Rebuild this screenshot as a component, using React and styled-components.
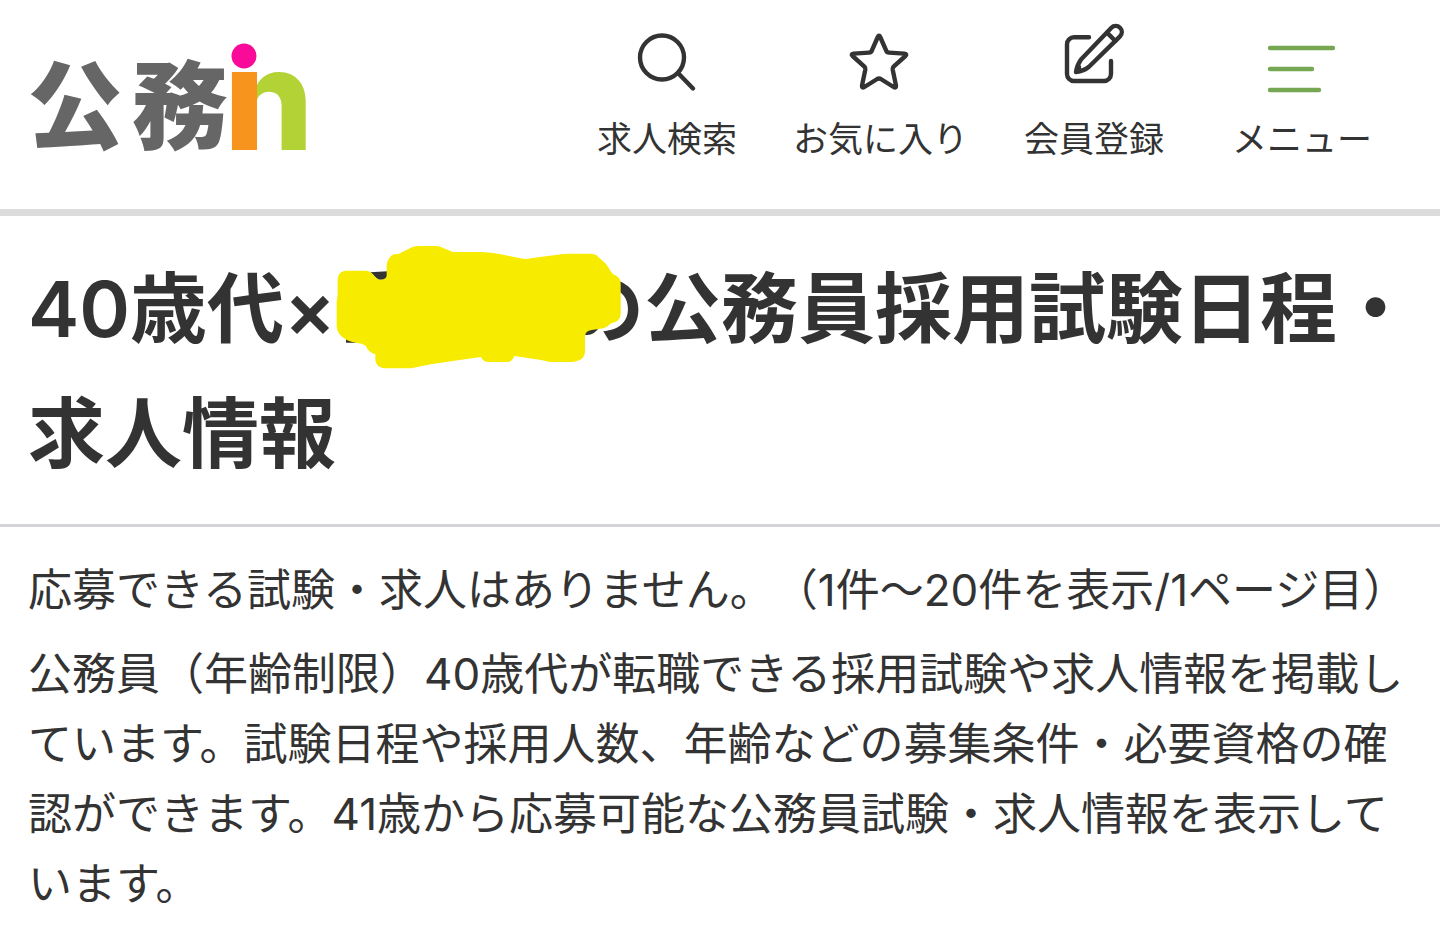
import React from 'react'
import styled, { createGlobalStyle } from 'styled-components'


const App = () => (
    <>
        <GlobalStyle />

        <Header>
            <LogoLink href="#" aria-label="公務in">
                <Logo />
            </LogoLink>

            <Nav>
                <NavLink href="#search">
                    <SearchIcon />
                    求人検索
                </NavLink>
                <NavLink href="#favorites">
                    <StarIcon />
                    お気に入り
                </NavLink>
                <NavLink href="#register">
                    <EditIcon />
                    会員登録
                </NavLink>
                <MenuButton type="button">
                    <MenuIcon />
                    メニュー
                </MenuButton>
            </Nav>
        </Header>

        <main>
            <TitleArea>
                <Title>
                    40歳代×
                    <Hidden><Marker /></Hidden>
                    の公務員採用試験日程・求人情報
                </Title>
            </TitleArea>

            <Intro>
                <Text>応募できる試験・求人はありません。（1件～20件を表示/1ページ目）</Text>
                <Text>
                    公務員（年齢制限）40歳代が転職できる採用試験や求人情報を掲載しています。試験日程や採用人数、年齢などの募集条件・必要資格の確認ができます。41歳から応募可能な公務員試験・求人情報を表示しています。
                </Text>
            </Intro>
        </main>
    </>
)

const Logo = () => (
    <LogoSvg viewBox="0 0 278 110" aria-hidden="true">
        <LogoKanji x="-3" y="99">公</LogoKanji>
        <LogoKanji x="102" y="99">務</LogoKanji>
        <LogoLetter x="194" y="108">n</LogoLetter>
        <rect x="202" y="30" width="25" height="78" fill="#f7941e" />
        <circle cx="214" cy="14" r="12.5" fill="#f90a98" />
    </LogoSvg>
)

const SearchIcon = () => (
    <Icon viewBox="0 0 72 72" aria-hidden="true">
        <circle cx="31" cy="35.5" r="22" />
        <path d="M47 51L62 66.5" />
    </Icon>
)

const StarIcon = () => (
    <Icon viewBox="0 0 72 72" aria-hidden="true">
        <path d="M33.8 15Q35 12.6 36.2 15L42.2 28.6Q43 30.5 45 30.6L60.5 31.6Q63.4 32 61.4 34L49.6 44.6Q48.4 45.8 48.7 47.6L52 63.6Q52.2 66.6 49.6 65L36.8 57Q35 56 33.2 57L20.4 65Q17.8 66.6 18 63.6L21.3 47.6Q21.6 45.8 20.4 44.6L8.6 34Q6.6 32 9.5 31.6L25 30.6Q27 30.5 27.8 28.6Z" />
    </Icon>
)

const EditIcon = () => (
    <Icon viewBox="0 0 72 72" aria-hidden="true">
        <path d="M31 15.3H16a7 7 0 0 0-7 7V52a7 7 0 0 0 7 7H46a7 7 0 0 0 7-7V39" />
        <path d="M18 50Q19 43 23 37.5L53.4 5.8a6 6 0 0 1 8.6 8.6L31 44.8Q26 49 18 50L21 45" />
        <path d="M49 10.6L57.4 19" />
    </Icon>
)

const MenuIcon = () => (
    <Icon viewBox="0 0 72 72" $color="#76a854" aria-hidden="true">
        <path d="M4 26H67M4 47H46M4 68H53" />
    </Icon>
)

const Marker = () => (
    <MarkerSvg viewBox="45 30 861 375" aria-hidden="true">
        <path fill="#333" d="M148 112L200 109V134H172ZM75 312H104V323H75Z" />
        <path
            fill="#f7eb00"
            d="M72 107H134Q148 108 156 118Q168 136 180 134Q197 133 197 120V92Q200 66 218 58L232 57L268 39Q278 33 292 33H345Q356 33 368 40L396 51H480Q510 52 540 58L598 70Q614 74 630 70L720 58L740 56H812Q826 57 834 68Q858 86 866 104L876 118Q899 126 899 145V236Q898 256 880 262Q868 264 860 274Q850 281 838 281L812 285Q792 288 792 304V352Q790 372 770 377L756 381H686L660 375L580 363Q574 380 560 381H500Q486 380 480 366L400 377L330 388L270 400H188Q166 396 163 376V358Q142 352 134 332L122 326Q90 322 76 314Q48 300 47 274V200L50 180V132Q52 110 72 107Z"
        />
    </MarkerSvg>
)

const GlobalStyle = createGlobalStyle`
    * {
        box-sizing: border-box;
    }

    body {
        margin: 0;
        background-color: #fff;
        color: #333;
        font-family: Inter, 'Noto Sans CJK JP', sans-serif;
        text-spacing-trim: space-all;
    }
`

const Header = styled.header`
    display: flex;
    justify-content: space-between;
    align-items: flex-start;
    padding: 22px 68px 46px 30px;
    border-bottom: 7px solid #dcdcdc;
`

const LogoLink = styled.a`
    display: block;
    padding-top: 20px;
`

const LogoSvg = styled.svg`
    display: block;
    width: 278px;
    height: 110px;
    overflow: visible;
`

const LogoKanji = styled.text`
    font-family: 'Noto Sans CJK JP', sans-serif;
    font-size: 96px;
    font-weight: 900;
    fill: #666;
`

const LogoLetter = styled.text`
    font-family: Inter, sans-serif;
    font-size: 141px;
    font-weight: 800;
    fill: #b2d235;
`

const Nav = styled.nav`
    display: flex;
    gap: 56px;
`

const NavLink = styled.a`
    display: flex;
    flex-direction: column;
    align-items: center;
    gap: 21px;
    color: #333;
    font-size: 35px;
    line-height: 48px;
    text-decoration: none;
    white-space: nowrap;
`

const MenuButton = styled(NavLink).attrs({ as: 'button' })`
    margin-left: 12px;
    padding: 0;
    border: none;
    background: none;
    font-family: inherit;
    cursor: pointer;
`

const Icon = styled.svg`
    width: 72px;
    height: 72px;
    fill: none;
    stroke: ${({ $color }) => $color || '#333'};
    stroke-width: 4.4px;
    stroke-linecap: round;
    stroke-linejoin: round;
`

const TitleArea = styled.div`
    padding: 31px 20px 27px 28px;
    border-bottom: 3px solid #d3d3d8;
`

const Title = styled.h1`
    margin: 0;
    font-size: 77px;
    font-weight: 600;
    line-height: 125px;
`

const Hidden = styled.span`
    display: inline-block;
    position: relative;
    width: 3em;
    height: 125px;
    vertical-align: top;
`

const MarkerSvg = styled.svg`
    position: absolute;
    top: -2px;
    left: 0;
    width: 287px;
    height: 125px;
`

const Intro = styled.section`
    padding: 28px 10px 18px 28px;
`

const Text = styled.p`
    margin: 0;
    font-size: 44px;
    line-height: 70px;

    & + & {
        margin-top: 14px;
    }
`

export default App
